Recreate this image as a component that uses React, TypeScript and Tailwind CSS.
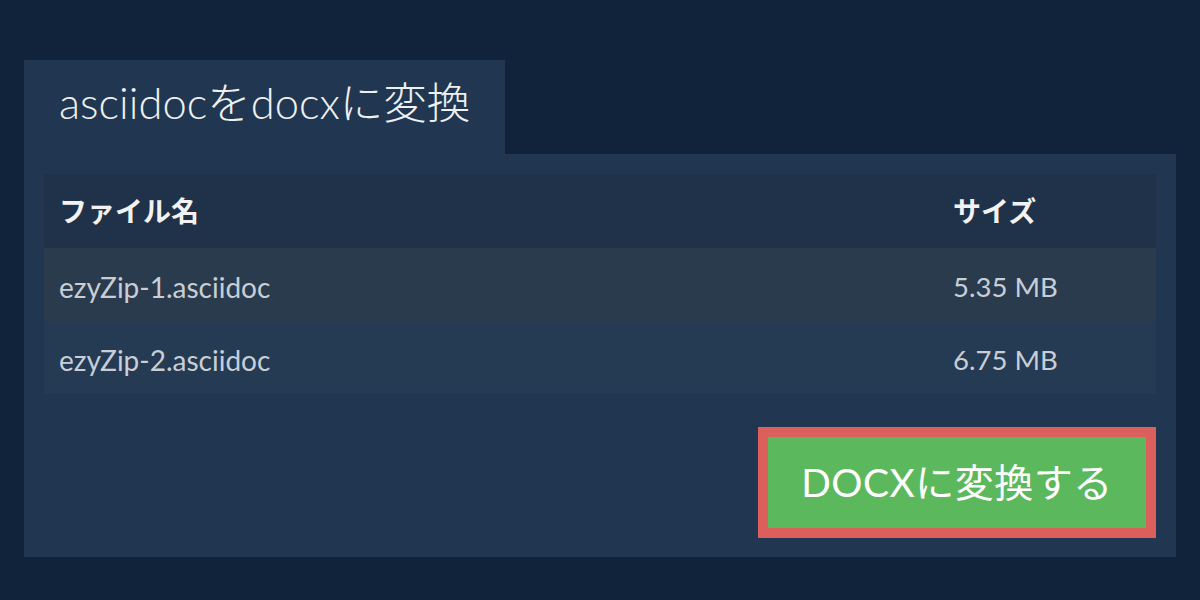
import React from "react";

const files = [
  { name: "ezyZip-1.asciidoc", size: "5.35 MB" },
  { name: "ezyZip-2.asciidoc", size: "6.75 MB" },
];

export default function App() {
  return (
    <div
      className="w-[1200px] h-[600px] bg-[#10233a] pt-[60px] px-[24px]"
      style={{ fontFamily: '"Lato", "Noto Sans CJK JP", sans-serif' }}
    >
      {/* Tab */}
      <div className="w-[481px] h-[94px] bg-[#213650] pl-[35px] pt-[12px]">
        <h1 className="text-[43.5px] leading-[60px] text-[#eef0f2] font-light whitespace-nowrap">
          asciidocをdocxに変換
        </h1>
      </div>

      {/* Panel */}
      <div className="w-[1152px] h-[403px] bg-[#213650] pt-[20px] px-[20px]">
        <table className="w-[1112px] border-collapse">
          <thead>
            <tr className="bg-[#1f3249] h-[74px]">
              <th className="text-left pl-[15px] text-[28px] font-bold text-[#f2f2f2]">
                ファイル名
              </th>
              <th className="text-left w-[203px] text-[28px] font-bold text-[#f2f2f2]">
                サイズ
              </th>
            </tr>
          </thead>
          <tbody>
            {files.map((f, i) => (
              <tr
                key={f.name}
                className={`${i === 0 ? "bg-[#2a3b4e] h-[74px]" : "bg-[#253a53] h-[72px]"}`}
              >
                <td className="pl-[15px] pt-[3px] text-[28px] text-[#c8ced6]">{f.name}</td>
                <td className="pt-[3px] text-[27.5px] text-[#c8ced6]">{f.size}</td>
              </tr>
            ))}
          </tbody>
        </table>

        <div className="flex justify-end mt-[33px]">
          <button className="w-[398px] h-[111px] border-[10px] border-[#db605c] bg-[#5cb85c] text-white text-[39px] tracking-[0.5px] whitespace-nowrap">
            DOCXに変換する
          </button>
        </div>
      </div>
    </div>
  );
}
